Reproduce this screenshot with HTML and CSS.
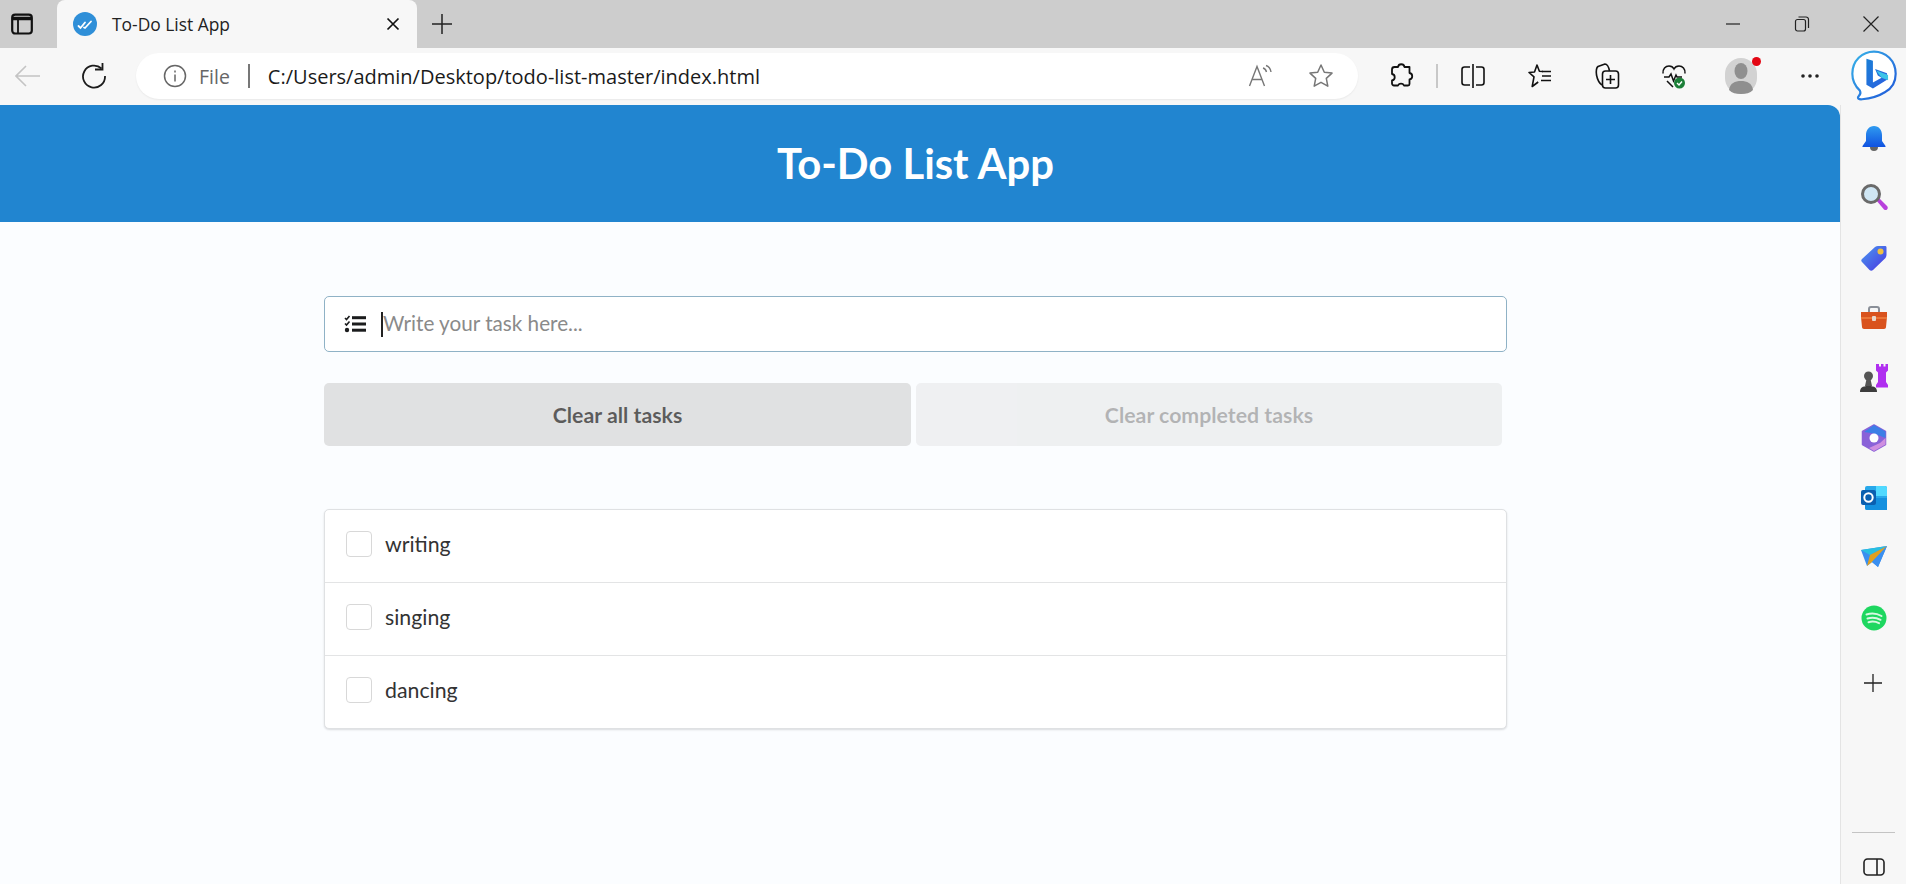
FILE: index.html
```html
<!DOCTYPE html>
<html lang="en">
<head>
<meta charset="utf-8">
<title>To-Do List App</title>
<link rel="stylesheet" href="styles.css">
</head>
<body>
<div class="tabstrip">
  <div class="tabstrip-btn">
    <svg class="i22" viewBox="0 0 22 22" fill="none" stroke="#111"><rect x="1.200" y="1.700" width="19.600" height="18.800" rx="3" stroke-width="2.200"/><path d="M1.500 5.500h19" stroke-width="3.500"/><path d="M7 7v13" stroke-width="1.800"/></svg>
  </div>
  <div class="tab">
    <svg class="favicon" viewBox="0 0 24 24"><circle cx="12" cy="12" r="12" fill="#2f8fd8"/><path d="M5.500 14l2 2 4.500-5.500M11 15.500l1 .5 6-6.500" fill="none" stroke="#fff" stroke-width="1.800" stroke-linecap="round"/></svg>
    <span class="tab-title">To-Do List App</span>
    <svg class="tab-close" viewBox="0 0 14 14" stroke="#111" stroke-width="1.700"><path d="M1.500 1.500l11 11M12.500 1.500l-11 11"/></svg>
  </div>
  <div class="newtab">
    <svg class="i22" viewBox="0 0 22 22" stroke="#222" stroke-width="1.500"><path d="M11 1v20M1 11h20"/></svg>
  </div>
  <div class="winctl">
    <div class="winbtn"><svg class="i16" viewBox="0 0 16 16" stroke="#222" stroke-width="1.200"><path d="M1 8h14"/></svg></div>
    <div class="winbtn"><svg class="i16" viewBox="0 0 16 16" fill="none" stroke="#222" stroke-width="1.200"><rect x="1.500" y="3.500" width="10" height="11.500" rx="2"/><path d="M4.500 1h7.500a2.500 2.500 0 0 1 2.500 2.500v8.500"/></svg></div>
    <div class="winbtn"><svg class="i16" viewBox="0 0 16 16" stroke="#222" stroke-width="1.200"><path d="M.5.500l15 15M15.500.500l-15 15"/></svg></div>
  </div>
</div>

<div class="toolbar">
  <div class="nav nav-back"><svg class="i26" viewBox="0 0 26 26" fill="none" stroke="#c4c4c4" stroke-width="1.600"><path d="M1 13h24M11 3L1 13l10 10"/></svg></div>
  <div class="nav nav-reload"><svg class="i26" viewBox="0 0 26 26" fill="none" stroke="#1c1c1c" stroke-width="1.800"><path d="M20.500 5.500A11 11 0 1 0 24 13"/><path d="M14 6.500h7.500V-.500" /></svg></div>
  <div class="address">
    <svg class="info" viewBox="0 0 24 24" fill="none" stroke="#666" stroke-width="1.500"><circle cx="12" cy="12" r="10.500"/><path d="M12 10.500v7M12 6.500v2"/></svg>
    <span class="file">File</span>
    <span class="addr-sep"></span>
    <span class="url">C:/Users/admin/Desktop/todo-list-master/index.html</span>
    <div class="addr-icons">
      <svg class="i26" viewBox="0 0 26 26" fill="none" stroke="#777" stroke-width="1.400"><path d="M1.500 23L9 3.500 16.500 23M4.500 16.500h9"/><path d="M15 5c2 .5 3 2 3.500 4M18 2.500c3 1 4.500 3.500 5 6.500"/></svg>
      <svg class="i26" viewBox="0 0 26 26" fill="none" stroke="#777" stroke-width="1.500" stroke-linejoin="round"><path d="M13 2l3.300 7.200 7.700.9-5.700 5.300 1.500 7.800-6.800-3.900-6.800 3.900 1.500-7.800L2 10.100l7.700-.9z"/></svg>
    </div>
  </div>
  <div class="tool tool-first"><svg class="i26" viewBox="0 0 26 26" fill="none" stroke="#111" stroke-width="1.800" stroke-linejoin="round"><path d="M10 5.500a3.300 3.300 0 0 1 6.500 0h5v6a3.300 3.300 0 0 1 0 6.500v4.500a1.500 1.500 0 0 1-1.500 1.500h-4a3.300 3.300 0 0 0-6 0H6a2 2 0 0 1-2-2v-3a3.300 3.300 0 0 0 0-6.500V8a2.500 2.500 0 0 1 2.500-2.500z" transform="translate(0 -1.500)"/></svg></div>
  <span class="tool-sep"></span>
  <div class="tool tool-split"><svg class="i26" viewBox="0 0 26 26" fill="none" stroke="#111" stroke-width="1.600"><path d="M10 4H4.500A2.500 2.500 0 0 0 2 6.500v13A2.500 2.500 0 0 0 4.500 22H10M16 4h5.500A2.500 2.500 0 0 1 24 6.500v13a2.500 2.500 0 0 1-2.500 2.500H16M13 1v24"/></svg></div>
  <div class="tool"><svg class="i26" viewBox="0 0 26 26" fill="none" stroke="#111" stroke-width="1.600" stroke-linejoin="round"><path d="M16 8.500l-3.600-.3L10 2 7.500 9l-5.500.5 5 4.300-1.800 9.700 6-4.500"/><path d="M15 13h9M15 8.500h9M14 17.500h10"/></svg></div>
  <div class="tool"><svg class="i26" viewBox="0 0 26 26" fill="none" stroke="#111" stroke-width="1.600" stroke-linejoin="round"><rect x="8.500" y="8" width="16" height="17" rx="3"/><path d="M16.500 12v9M12 16.500h9M8 22C5 20 3.500 17 2.500 12 2 8 2 5 4 3.500L11 1c2 0 3.500 2 4.500 7"/></svg></div>
  <div class="tool"><svg class="i26" viewBox="0 0 26 26"><path d="M2 10.500C1.500 6 4.500 3 8 3c2 0 4 1 5 3 1-2 3-3 5-3 3.500 0 6.500 3 6 7.500M3 14h5l2-3 2.500 7 2.500-6 1 2h5M6 18l6 6" fill="none" stroke="#111" stroke-width="1.500"/><circle cx="18.500" cy="20" r="5.500" fill="#1b7f37"/><path d="M16 20l2 2 3-3.500" fill="none" stroke="#fff" stroke-width="1.400"/></svg></div>
  <div class="tool">
    <div class="avatar">
      <svg class="avatar-svg" viewBox="0 0 32 36"><rect width="32" height="36" rx="16" fill="#d2d2d2"/><ellipse cx="16" cy="13" rx="6.500" ry="8" fill="#8f8f8f"/><path d="M4 32c1-7 6-9 12-9s11 2 12 9c-3 3-7 4-12 4s-9-1-12-4z" fill="#8f8f8f"/></svg>
      <span class="avatar-dot"></span>
    </div>
  </div>
  <div class="tool tool-dots"><svg class="i26" viewBox="0 0 26 26" fill="#222"><circle cx="6" cy="13" r="1.800"/><circle cx="13" cy="13" r="1.800"/><circle cx="20" cy="13" r="1.800"/></svg></div>
  <div class="tool tool-bing">
    <svg class="bing" viewBox="0 0 44 48">
      <defs>
        <linearGradient id="bg1" x1="0" y1="0" x2="1" y2="1"><stop offset="0" stop-color="#37b3e8"/><stop offset="1" stop-color="#1f55d8"/></linearGradient>
        <linearGradient id="bg2" x1="0" y1="0" x2="1" y2="1"><stop offset="0" stop-color="#1a7fd6"/><stop offset="1" stop-color="#2b5fe0"/></linearGradient>
      </defs>
      <path d="M22 1.500C33 1.500 42 10 42 22c0 8-4 14-10 17-4 2.500-10 5.500-21 6.500-3 .3-5-1-3-3 1.500-1.500 2-3 1-5C4 33 2 28 2 22 2 10 11 1.500 22 1.500z" fill="#fff" stroke="url(#bg1)" stroke-width="2"/>
      <path d="M15 8l6 2v20l8-4.500-3.500-2-2.500-6 11 4v6l-13 8-6-3.500z" fill="url(#bg2)"/>
      <path d="M24 19l11 4v5l-6-2.500z" fill="#3cc4e8"/>
    </svg>
  </div>
</div>

<div class="window">
  <main class="page">
    <header class="app-header"><h1 class="app-title">To-Do List App</h1></header>
    <section class="container">
      <div class="task-input">
        <svg class="list-icon" viewBox="0 0 22 18" fill="#1b1c1d"><path d="M1 3l1.500 1.500L5.500 1" fill="none" stroke="#1b1c1d" stroke-width="1.600"/><path d="M1 8.500l1.500 1.500 3-3.500" fill="none" stroke="#1b1c1d" stroke-width="1.600"/><circle cx="3" cy="15" r="2.200"/><rect x="8" y="1.200" width="14" height="3"/><rect x="8" y="7.500" width="14" height="3"/><rect x="8" y="13.700" width="14" height="3"/></svg>
        <span class="caret"></span>
        <input class="task-field" type="text" placeholder="Write your task here...">
      </div>
      <div class="actions">
        <button class="btn" type="button">Clear all tasks</button>
        <button class="btn btn-disabled" type="button">Clear completed tasks</button>
      </div>
      <ul class="tasks">
        <li class="task"><span class="check"></span><span class="task-name">writing</span></li>
        <li class="task"><span class="check"></span><span class="task-name">singing</span></li>
        <li class="task"><span class="check"></span><span class="task-name">dancing</span></li>
      </ul>
    </section>
  </main>

  <aside class="sidebar">
    <div class="side-item"><svg class="i28" viewBox="0 0 28 28"><defs><linearGradient id="s1" x1="0" y1="0" x2="0" y2="1"><stop offset="0" stop-color="#2f9bf0"/><stop offset="1" stop-color="#1052e0"/></linearGradient></defs><path d="M10 23h8a4 4 0 0 1-8 0z" fill="#666"/><path d="M14 2c5 0 8 4 8 9v6l3.500 5c.2.500 0 1-.5 1H3c-.5 0-.7-.5-.5-1L6 17v-6c0-5 3-9 8-9z" fill="url(#s1)"/></svg></div>
    <div class="side-item side-search"><svg class="i28" viewBox="0 0 28 28"><path d="M16 17l3-2 8 8c1 1 1 2.500 0 3.500s-2 .5-3 0z" fill="#b840dc"/><circle cx="11" cy="11" r="8.500" fill="#cfe6f4" stroke="#6a6a6a" stroke-width="3"/></svg></div>
    <div class="side-item"><svg class="i28" viewBox="0 0 28 28"><defs><linearGradient id="s3" x1="0" y1="0" x2="1" y2="1"><stop offset="0" stop-color="#4a9af0"/><stop offset="1" stop-color="#4a35e0"/></linearGradient></defs><path d="M2 15L15 3c1-.7 2-1 3-1h7c1 0 1.500 .5 1.500 1.500V11c0 1-.5 2-1 3L13 26c-1 1-2.500 1-3.500 0L2 18c-1-1-1-2 0-3z" fill="url(#s3)"/><circle cx="20.500" cy="7.500" r="3" fill="#f0c040"/></svg></div>
    <div class="side-item"><svg class="i28" viewBox="0 0 28 28"><path d="M9 8V5c0-1 1-2 2-2h6c1 0 2 1 2 2v3" fill="none" stroke="#8a8f98" stroke-width="2"/><path d="M1 8h26v5l-1 10c0 1-1 2-2 2H4c-1 0-2-1-2-2L1 13z" fill="#d9531e"/><path d="M1 14h26" stroke="#f08040" stroke-width="1.500"/><rect x="12" y="12" width="4" height="5" rx="1" fill="#e8d8cc"/></svg></div>
    <div class="side-item"><svg class="i28" viewBox="0 0 28 28"><circle cx="8.500" cy="12" r="4.500" fill="#555"/><path d="M6.500 15h4l1.500 7H5z" fill="#555"/><path d="M0 28c0-4 2-6 8.500-6s8.500 2 8.500 6z" fill="#3d3d3d"/><path d="M16 0h3v2.500h2V0h2.500v2.500h2V0H28v6.500l-2 2V18l2 3v2.500H16V21l2-3V8.500l-2-2z" fill="#b02ff0"/></svg></div>
    <div class="side-item"><svg class="i28" viewBox="0 0 28 28"><path d="M14 1l11.500 6.500v13L14 27 2.500 20.500v-13z" fill="#8a62d8" stroke="#8a62d8" stroke-width="1.500" stroke-linejoin="round"/><path d="M14 1l11.500 6.500V14L14 9.500 4 8z" fill="#3d7fe6"/><path d="M25.500 14v6.500L14 27l-5-3 11-5z" fill="#cf8fe0"/><circle cx="14" cy="14" r="4.500" fill="#fff"/></svg></div>
    <div class="side-item"><svg class="i28" viewBox="0 0 28 28"><rect x="5" y="2" width="22" height="24" rx="2" fill="#28a8ea"/><path d="M16 2h9a2 2 0 0 1 2 2v8H16z" fill="#50d9ff"/><path d="M5 14l11 0 11 0v12H7a2 2 0 0 1-2-2z" fill="#1490df"/><rect x="1" y="6" width="15" height="15" rx="2" fill="#0a5fb0"/><circle cx="8.500" cy="13.500" r="4.200" fill="none" stroke="#fff" stroke-width="2"/></svg></div>
    <div class="side-item"><svg class="i28" viewBox="0 0 28 28"><path d="M1 6l26-4-9 21-6-5-5 4z" fill="#3a8ff0"/><path d="M1 6l26-4L10 11z" fill="#28bfe0"/><path d="M7 22l3-11 17-9-15 16z" fill="#e0a020"/><path d="M12 18l15-16-9 21z" fill="#3a8ff0"/></svg></div>
    <div class="side-item"><svg class="i28" viewBox="0 0 28 28" fill="none"><circle cx="14" cy="14" r="12.500" fill="#1ed760"/><path d="M6.500 10.500c5-1.500 10.500-1 15 1.500M7.500 14.500c4.500-1.200 9-.8 13 1.300M8.500 18.200c3.500-1 7.500-.6 10.500 1" stroke="#d8f8e2" stroke-width="2" stroke-linecap="round"/></svg></div>
    <div class="side-item side-plus"><svg class="i20" viewBox="0 0 20 20" stroke="#222" stroke-width="1.300"><path d="M10 1v18M1 10h18"/></svg></div>
    <div class="side-foot">
      <span class="side-rule"></span>
      <svg class="side-panel" viewBox="0 0 22 18" fill="none" stroke="#222" stroke-width="1.600"><rect x="1" y="1" width="20" height="16" rx="3.500"/><path d="M14 1v16"/></svg>
    </div>
  </aside>
</div>
</body>
</html>
```

FILE: styles.css
```css
* { box-sizing: border-box; }
html, body { height: 100%; margin: 0; }
body {
  display: flex;
  flex-direction: column;
  height: 884px;
  overflow: hidden;
  background: #f7f7f7;
  font-family: "Lato", "Liberation Sans", sans-serif;
}
svg { display: block; flex: none; }
.i16 { width: 16px; height: 16px; }
.i20 { width: 20px; height: 20px; }
.i22 { width: 22px; height: 22px; }
.i26 { width: 26px; height: 26px; }
.i28 { width: 28px; height: 28px; }

.tabstrip {
  display: flex;
  align-items: center;
  height: 48px;
  background: #cdcdcd;
  flex: none;
}
.tabstrip-btn { width: 57px; padding-left: 11px; }
.tab {
  display: flex;
  align-items: center;
  width: 360px;
  height: 48px;
  padding: 0 15px 0 16px;
  background: #f7f7f7;
  border-radius: 8px 8px 0 0;
  font-family: "Open Sans", "Noto Sans", sans-serif;
}
.favicon { width: 24px; height: 24px; }
.tab-title { margin-left: 15px; font-size: 17.400px; color: #222; flex: 1; }
.tab-close { width: 14px; height: 14px; margin-right: 2px; }
.newtab { margin-left: 14px; }
.winctl { display: flex; margin-left: auto; }
.winbtn { width: 68px; display: flex; justify-content: center; margin-right: 1px; }

.toolbar {
  display: flex;
  align-items: center;
  height: 57px;
  padding-bottom: 1px;
  background: #f7f7f7;
  flex: none;
}
.nav { display: flex; justify-content: center; }
.nav-back { width: 56px; }
.nav-reload { width: 76px; }
.address {
  display: flex;
  align-items: center;
  width: 1222px;
  height: 46px;
  margin-left: 4px;
  padding-left: 27px;
  background: #fff;
  border-radius: 23px;
  box-shadow: 0 1px 2px rgba(0,0,0,.06);
  font-family: "Open Sans", "Noto Sans", sans-serif;
}
.info { width: 24px; height: 24px; }
.file { margin-left: 12px; font-size: 19.500px; color: #666; }
.addr-sep { width: 2px; height: 24px; margin: 0 18px; background: #777; }
.url { font-size: 20px; color: #1a1a1a; }
.addr-icons { display: flex; gap: 34px; margin-left: auto; padding-right: 24px; }

.tool { display: flex; justify-content: center; align-items: center; width: 67px; }
.tool-first { width: 66px; margin-left: 10px; }
.tool-sep { width: 2px; height: 24px; margin: 0 2px; background: #c8c8c8; }
.tool-split { width: 66px; }
.tool-dots { position: relative; left: 2px; }
.tool-bing { width: 65px; }
.bing { width: 48px; height: 52px; }
.avatar { position: relative; width: 32px; height: 36px; }
.avatar-svg { width: 32px; height: 36px; }
.avatar-dot {
  position: absolute;
  top: -1px;
  right: -4px;
  width: 9px;
  height: 9px;
  background: #e30613;
  border-radius: 50%;
}

.window { display: flex; flex: 1; min-height: 0; }
.page {
  width: 1840px;
  flex: none;
  padding-right: 9px;
  background: #fbfdff;
  border-radius: 0 12px 0 0;
  overflow: hidden;
}
.app-header {
  display: flex;
  align-items: center;
  justify-content: center;
  height: 117px;
  margin-right: -9px;
  padding-right: 9px;
  background: #2185d0;
}
.app-title {
  margin: 0;
  font-size: 41.800px;
  font-weight: 700;
  color: #fff;
  line-height: 1;
}
.container {
  width: 1183px;
  margin: 74px auto 0;
}
.task-input {
  display: flex;
  align-items: center;
  height: 56px;
  padding-left: 19px;
  background: #fff;
  border: 1px solid #8fb2c6;
  border-radius: 5px;
}
.list-icon { width: 22px; height: 18px; margin-top: 0; }
.caret { width: 2px; height: 25px; margin-left: 15px; background: #222; flex: none; }
.task-field {
  flex: 1;
  height: 100%;
  padding: 0 0 2px;
  border: 0;
  outline: 0;
  background: transparent;
  font: 400 20.700px "Lato", sans-serif;
  color: #333;
}
.task-field::placeholder { color: #8a8a8a; opacity: 1; }

.actions {
  display: grid;
  grid-template-columns: 587px 586px;
  gap: 5px;
  margin-top: 31px;
}
.btn {
  height: 63px;
  border: 0;
  border-radius: 5px;
  background: #e0e1e2;
  color: rgba(0,0,0,.6);
  font: 700 21.300px "Lato", sans-serif;
}
.btn-disabled { opacity: .45; }

.tasks {
  margin: 63px 0 0;
  padding: 0;
  list-style: none;
  background: #fff;
  border: 1px solid #dfe1e3;
  border-radius: 5px;
  box-shadow: 0 1px 2px rgba(34,36,38,.15);
}
.task {
  display: flex;
  align-items: center;
  height: 73px;
  padding: 0 0 5px 21px;
  border-top: 1px solid #e3e4e5;
}
.task:first-child { border-top: 0; height: 72px; }
.check {
  width: 26px;
  height: 26px;
  background: #fff;
  border: 1px solid #d8d8d8;
  border-radius: 4px;
}
.task-name { margin-left: 13px; font-size: 21.300px; color: #333; }

.sidebar {
  display: flex;
  flex-direction: column;
  width: 66px;
  flex: none;
  padding-top: 3px;
  background: #f7f7f7;
  border-left: 1px solid #e4e4e4;
}
.side-item {
  display: flex;
  justify-content: center;
  align-items: center;
  height: 60px;
  flex: none;
}
.side-search { padding-bottom: 2px; }
.side-plus { margin-top: 5px; padding-right: 2px; }
.side-foot {
  display: flex;
  flex-direction: column;
  align-items: center;
  margin-top: auto;
  padding-bottom: 8px;
}
.side-rule { width: 43px; height: 1px; background: #c4c4c4; margin-bottom: 25px; }
.side-panel { width: 22px; height: 18px; }
```
